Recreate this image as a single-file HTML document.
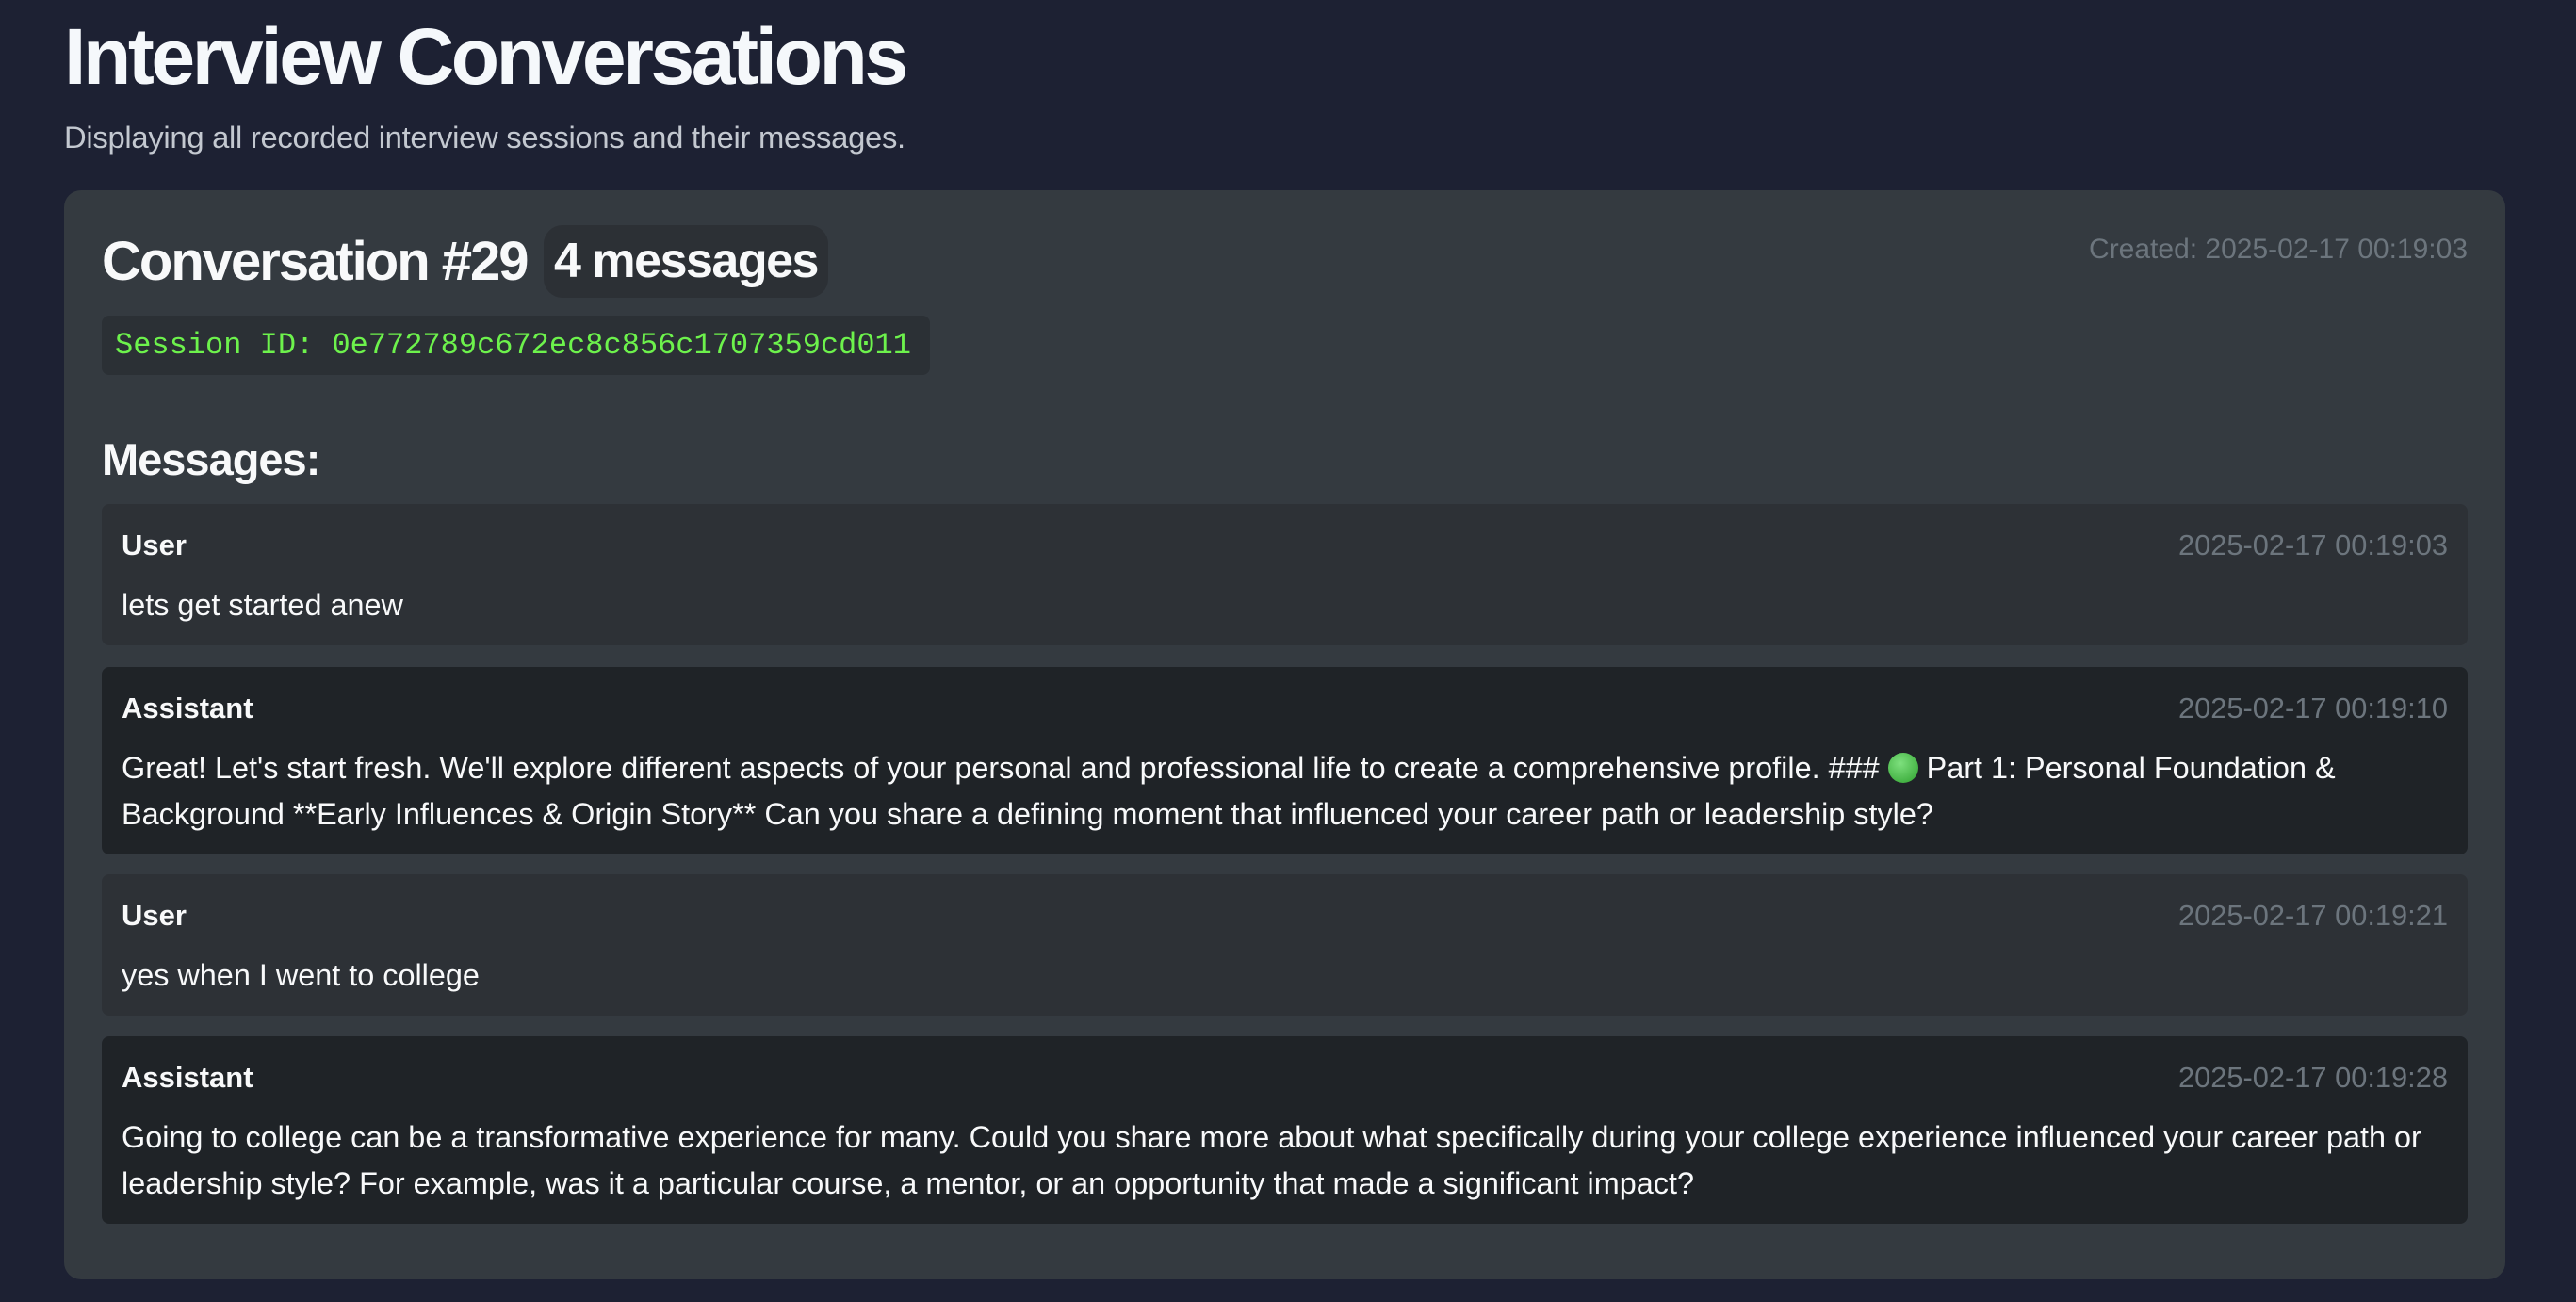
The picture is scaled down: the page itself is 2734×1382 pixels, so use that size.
<!DOCTYPE html>
<html><head><meta charset="utf-8"><style>
*{margin:0;padding:0;box-sizing:border-box}
html,body{width:2734px;height:1382px;overflow:hidden;background:#1d2133;font-family:"Liberation Sans",sans-serif;color:#f8f9fa}
.abs{position:absolute;white-space:nowrap}
h1{position:absolute;left:68px;top:12px;font-size:84px;line-height:96px;font-weight:bold;letter-spacing:-3.4px;color:#f5f8fb}
.sub{left:68px;top:126px;font-size:32.8px;line-height:40px;color:#c3c8d0;letter-spacing:-0.3px}
.card{position:absolute;left:68px;top:202px;width:2591px;height:1156px;background:#343a40;border-radius:18px}
.h2{left:40px;top:43px;font-size:58px;line-height:66px;font-weight:bold;letter-spacing:-2px}
.badge{left:509px;top:37px;width:302px;height:77px;background:#2c3035;border-radius:20px;font-size:52px;line-height:77px;font-weight:bold;text-align:center;letter-spacing:-1.5px}
.created{right:40px;top:45px;font-size:30px;line-height:36px;color:#6c757d}
.sess{left:40px;top:133px;width:879px;height:63px;background:#2b3035;border-radius:8px;font-family:"Liberation Mono",monospace;font-size:32px;line-height:63px;padding-left:14px;color:#6df24c}
.msgs{left:40px;top:258px;font-size:47px;line-height:56px;font-weight:bold;letter-spacing:-1px}
.m{position:absolute;left:40px;width:2511px;border-radius:8px;padding:22px 21px 17px 21px}
.u{background:#2d3136}.a{background:#1f2327}
.hd{height:44px;line-height:44px;display:flex;justify-content:space-between}
.role{font-weight:bold;font-size:31px}
.ts{font-size:30.8px;color:#6c757d}
.bd{margin-top:17px;font-size:32.4px;line-height:49px;white-space:nowrap}
.dot{display:inline-block;width:32px;height:32px;border-radius:50%;background:radial-gradient(circle at 40% 35%,#7ee07e,#2ea12e);vertical-align:-5px}
</style></head><body>
<h1>Interview Conversations</h1>
<div class="abs sub">Displaying all recorded interview sessions and their messages.</div>
<div class="card">
<div class="abs h2">Conversation #29</div>
<div class="abs badge">4 messages</div>
<div class="abs created">Created: 2025-02-17 00:19:03</div>
<div class="abs sess">Session ID: 0e772789c672ec8c856c1707359cd011</div>
<div class="abs msgs">Messages:</div>
<div class="m u" style="top:333px;height:150px"><div class="hd"><span class="role">User</span><span class="ts">2025-02-17 00:19:03</span></div><div class="bd">lets get started anew</div></div>
<div class="m a" style="top:506px;height:199px"><div class="hd"><span class="role">Assistant</span><span class="ts">2025-02-17 00:19:10</span></div><div class="bd">Great! Let's start fresh. We'll explore different aspects of your personal and professional life to create a comprehensive profile. ### <span class="dot"></span> Part 1: Personal Foundation &amp;<br>Background **Early Influences &amp; Origin Story** Can you share a defining moment that influenced your career path or leadership style?</div></div>
<div class="m u" style="top:726px;height:150px"><div class="hd"><span class="role">User</span><span class="ts">2025-02-17 00:19:21</span></div><div class="bd">yes when I went to college</div></div>
<div class="m a" style="top:898px;height:199px"><div class="hd"><span class="role">Assistant</span><span class="ts">2025-02-17 00:19:28</span></div><div class="bd">Going to college can be a transformative experience for many. Could you share more about what specifically during your college experience influenced your career path or<br>leadership style? For example, was it a particular course, a mentor, or an opportunity that made a significant impact?</div></div>
</div>
</body></html>
